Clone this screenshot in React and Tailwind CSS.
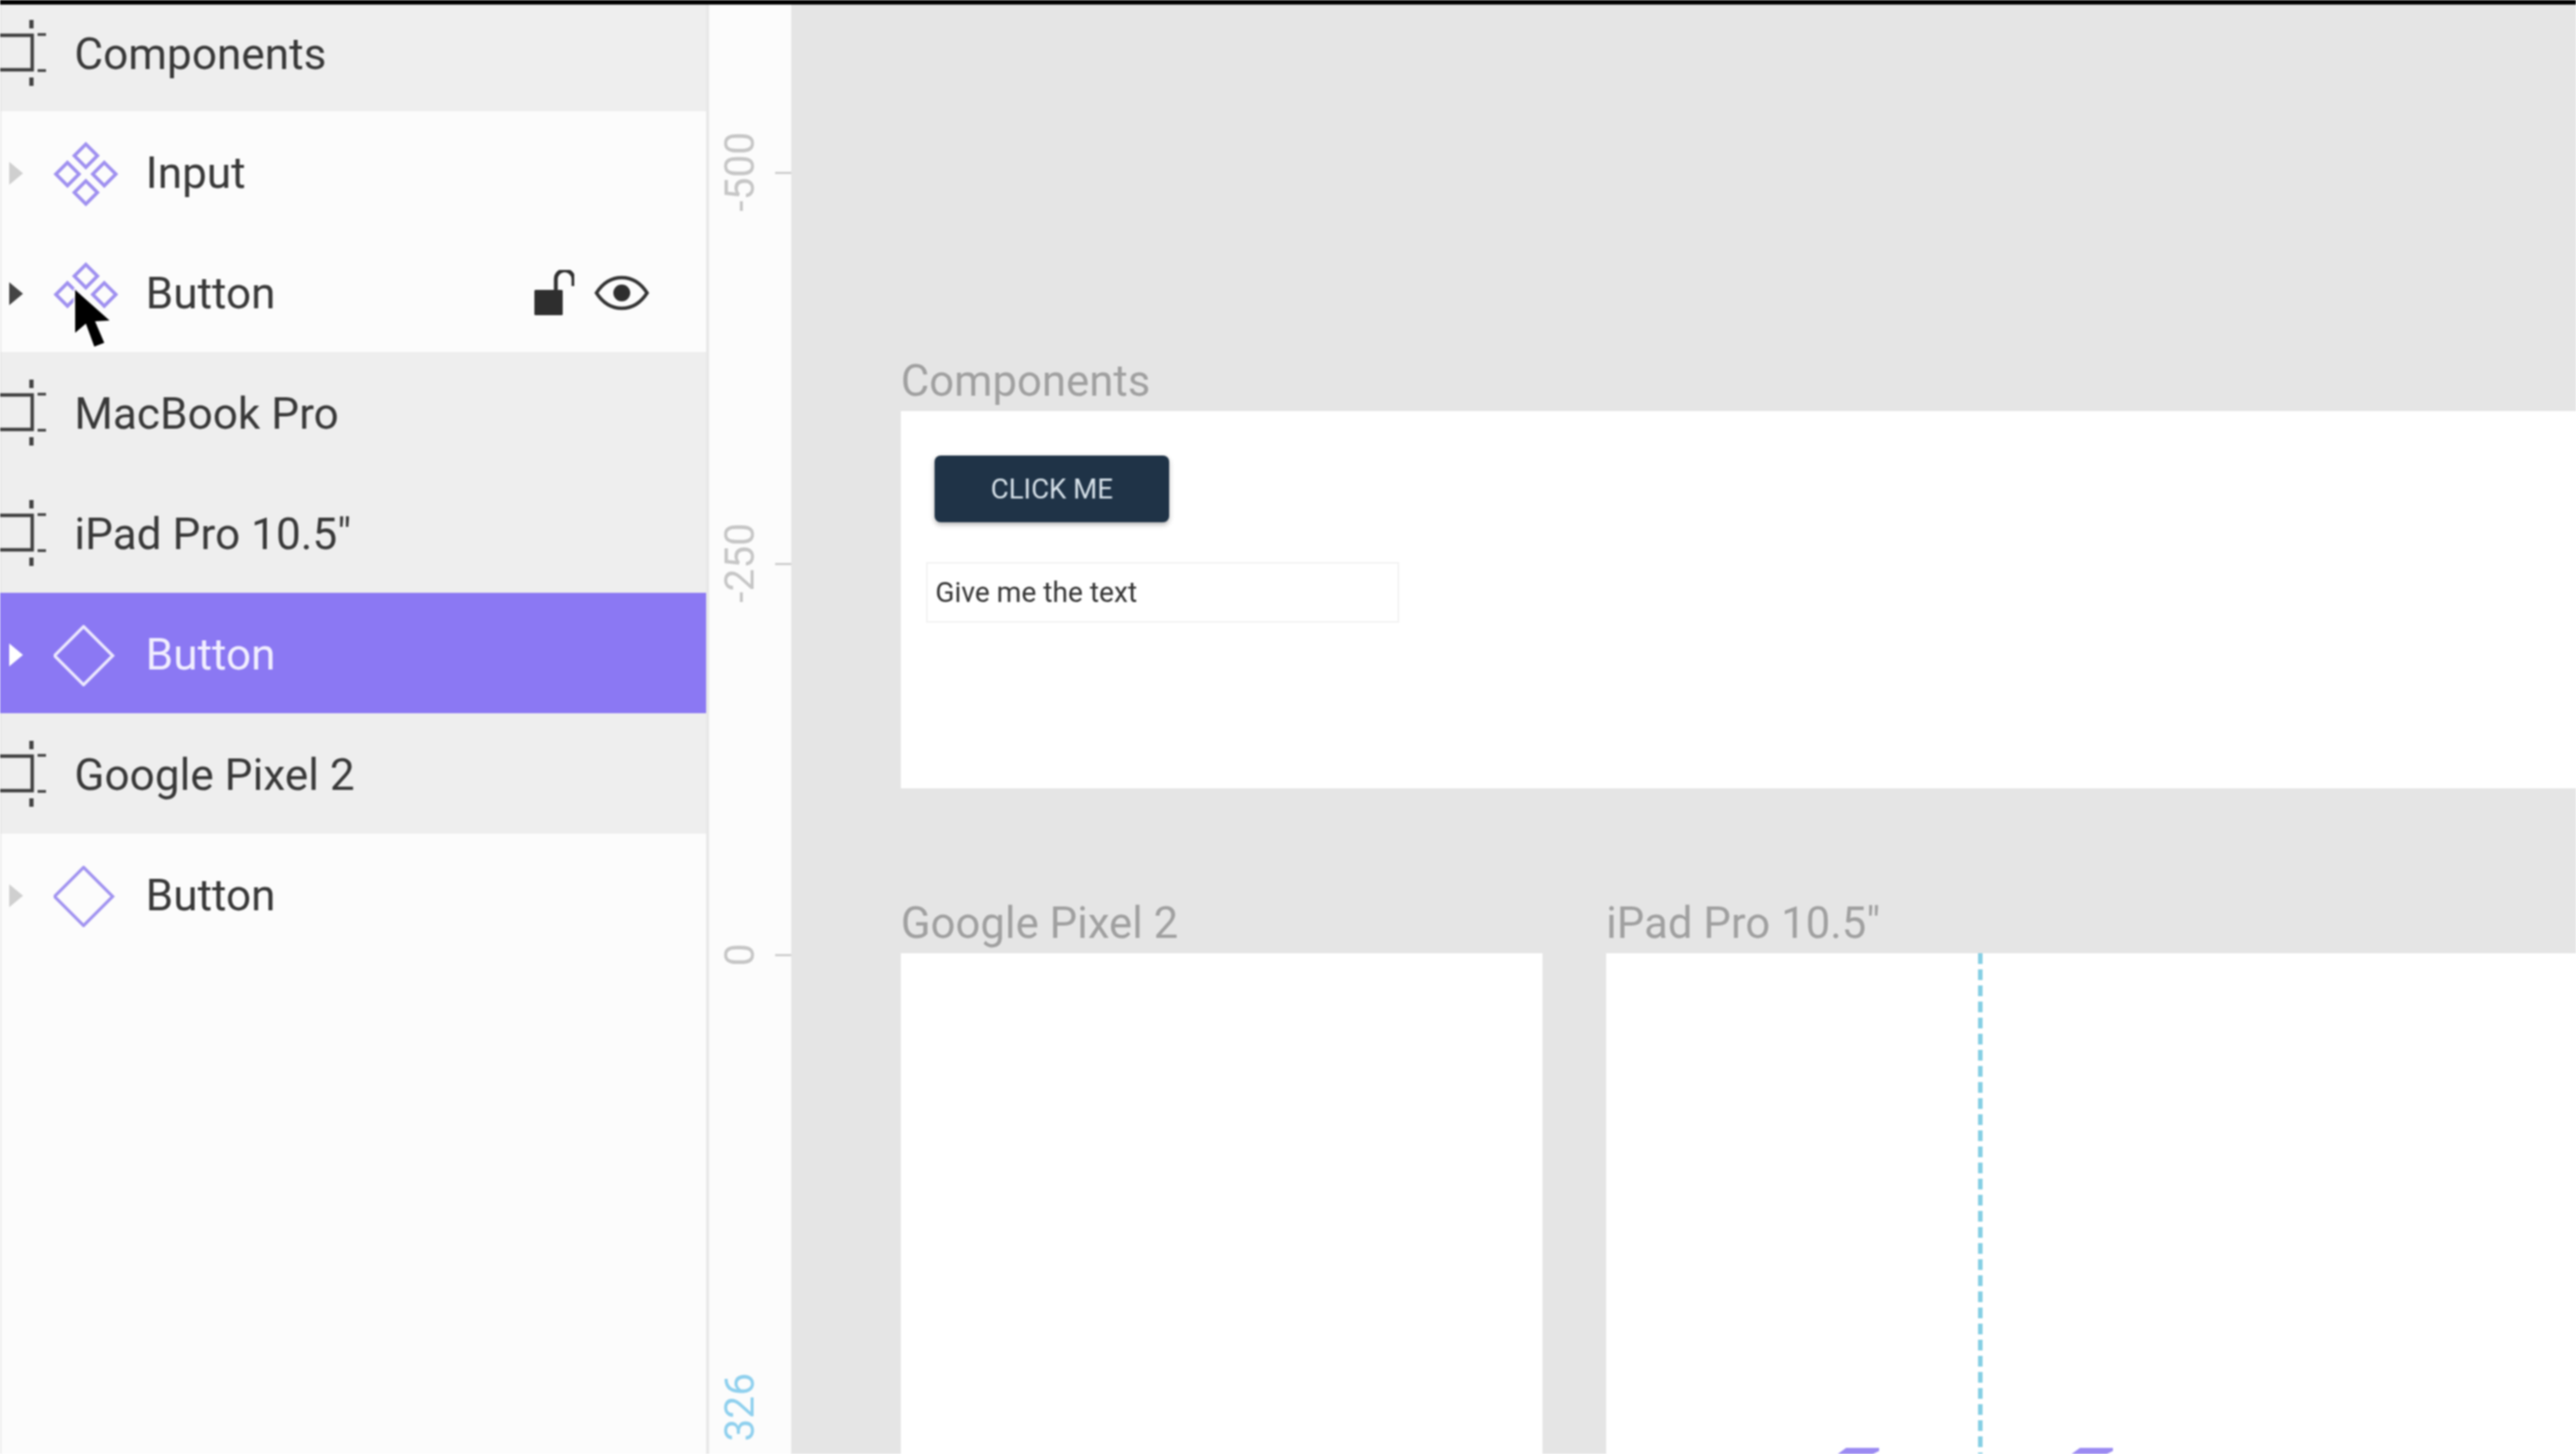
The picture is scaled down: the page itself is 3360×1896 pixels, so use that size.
const FrameIcon = () => (
  <svg width="64" height="90" viewBox="0 0 64 90" className="shrink-0" fill="none" stroke="#404040">
    <path d="M0 22H42V67H0" strokeWidth="4.5" />
    <path d="M41 2V13M41 77V88" strokeWidth="5.5" />
    <path d="M49 21H60M49 68H60" strokeWidth="3.5" />
  </svg>
);

const Triangle = ({ color }) => (
  <svg width="20" height="30" viewBox="0 0 20 30" className="shrink-0 mt-[4px]">
    <path d="M1 0L19 15L1 30Z" fill={color} />
  </svg>
);

const Quad = ({ hideBottom }) => (
  <svg width="84" height="84" viewBox="0 0 84 84" className="shrink-0 mt-[6px]" fill="none" stroke="#9f90f0" strokeWidth="4.5">
    <path d="M42 3L57 18L42 33L27 18Z" />
    <path d="M18 27L33 42L18 57L3 42Z" />
    <path d="M66 27L81 42L66 57L51 42Z" />
    {!hideBottom && <path d="M42 51L57 66L42 81L27 66Z" />}
  </svg>
);

const Diamond = ({ color }) => (
  <svg width="80" height="80" viewBox="0 0 80 80" className="shrink-0 mt-[6px]" fill="none" stroke={color} strokeWidth="4">
    <path d="M39 2L77 40L39 78L1 40Z" />
  </svg>
);

const GroupRow = ({ label, first }) => (
  <div className={`flex items-center bg-[#eeeeee] border-l-2 border-[#e6e6e6] ${first ? "h-[139px] pb-[14px]" : "h-[157px]"}`}>
    <div className="ml-[-2px] w-[97px] shrink-0">
      <FrameIcon />
    </div>
    <span className="text-[57.6px] leading-none mt-[4px] text-[#383838]">{label}</span>
  </div>
);

const ItemRow = ({ label, icon, triangle, selected, children }) => (
  <div className={`flex items-center h-[157px] ${selected ? "bg-[#8b78f3]" : "bg-[#fcfcfc] border-l-2 border-[#ececec]"}`}>
    <div className={`${selected ? "ml-[11px]" : "ml-[9px]"} w-[59px] shrink-0 flex`}>
      <Triangle color={triangle} />
    </div>
    <div className="w-[120px] shrink-0 flex">{icon}</div>
    <span className={`text-[57.6px] leading-none mt-[4px] ${selected ? "text-[#f1eefe]" : "text-[#383838]"}`}>{label}</span>
    {children}
  </div>
);

const Tick = ({ y }) => <div className="absolute right-0 w-[21px] h-[3px] bg-[#cfcfcf]" style={{ top: y }} />;

const RulerLabel = ({ y, children, blue }) => (
  <span
    className={`absolute left-[40px] w-0 h-0 flex items-center justify-center whitespace-nowrap text-[53px] leading-none -rotate-90 ${blue ? "text-[#8fd0ee]" : "text-[#c6c6c6]"}`}
    style={{ top: y }}
  >
    {children}
  </span>
);

const FrameLabel = ({ children }) => (
  <div className="h-[80px] flex items-center text-[57px] leading-none text-[#a0a0a0]">{children}</div>
);

const Peak = ({ left }) => (
  <svg width="58" height="10" viewBox="0 0 58 10" className="absolute bottom-0" style={{ left }}>
    <path d="M0 10L11 2H54L54 6L46 10Z" fill="#9b8af2" />
  </svg>
);

export default function App() {
  return (
    <div className="w-[3360px] h-[1896px] overflow-hidden flex flex-col bg-black font-['Roboto',sans-serif] blur-[1.2px]">
      <div className="h-[6px] shrink-0 bg-black" />
      <div className="flex-1 flex min-h-0">
        <div className="w-[925px] shrink-0 bg-[#fcfcfc] border-r-4 border-[#e8e8e8] flex flex-col relative">
          <GroupRow label="Components" first />
          <ItemRow label="Input" triangle="#cfcfcf" icon={<Quad />} />
          <ItemRow label="Button" triangle="#444444" icon={<Quad hideBottom />}>
            <div className="ml-auto mr-[73px] flex items-center gap-[25px]">
              <svg width="52" height="60" viewBox="0 0 52 60" className="mt-[2px]">
                <rect x="0" y="26" width="37" height="33" rx="1.5" fill="#2e2e2e" />
                <path d="M28 27V12A11.5 11.5 0 0 1 51 12V21" fill="none" stroke="#2e2e2e" strokeWidth="5" />
              </svg>
              <svg width="74" height="46" viewBox="0 0 74 46" className="mt-[2px]">
                <path d="M4 23C13 9 25 3 37 3C49 3 61 9 70 23C61 37 49 43 37 43C25 43 13 37 4 23Z" fill="none" stroke="#333333" strokeWidth="4.5" />
                <circle cx="37" cy="23" r="11" fill="#2e2e2e" />
              </svg>
            </div>
          </ItemRow>
          <GroupRow label="MacBook Pro" />
          <GroupRow label={'iPad Pro 10.5"'} />
          <ItemRow label="Button" selected triangle="#ffffff" icon={<Diamond color="#ece8fd" />} />
          <GroupRow label="Google Pixel 2" />
          <ItemRow label="Button" triangle="#cfcfcf" icon={<Diamond color="#a193f0" />} />
          <div className="flex-1 border-l-2 border-[#ececec]" />
          <svg width="64" height="92" viewBox="0 0 64 92" className="absolute left-[85px] top-[362px]">
            <path d="M13 10V66L27 54L38 84L51 79L39 51L58 50Z" fill="#000000" stroke="#ffffff" strokeWidth="5" strokeOpacity="0.75" paintOrder="stroke" strokeLinejoin="round" />
          </svg>
        </div>

        <div className="w-[107px] shrink-0 bg-[#fcfcfc] relative">
          <Tick y={218} />
          <Tick y={728} />
          <Tick y={1238} />
          <RulerLabel y={218}>-500</RulerLabel>
          <RulerLabel y={728}>-250</RulerLabel>
          <RulerLabel y={1239}>0</RulerLabel>
          <RulerLabel y={1829} blue>326</RulerLabel>
        </div>

        <div className="flex-1 min-w-0 bg-[#e5e5e5] pl-[143px] pt-[450px] flex flex-col">
          <FrameLabel>Components</FrameLabel>
          <div className="h-[492px] shrink-0 bg-white flex flex-col items-start">
            <div className="ml-[44px] mt-[58px] w-[306px] h-[87px] rounded-[8px] bg-[#1f3347] shadow-[0_3px_6px_rgba(0,0,0,0.3)] flex items-center justify-center text-[36px] text-[#d5e0e8]">
              CLICK ME
            </div>
            <div className="ml-[33px] mt-[52px] w-[617px] h-[79px] border-2 border-[#f2f2f2] flex items-center pl-[10px] text-[36.7px] text-[#333333]">
              Give me the text
            </div>
          </div>
          <div className="mt-[135px] flex flex-1 min-h-0 gap-[83px]">
            <div className="w-[837px] shrink-0 flex flex-col">
              <FrameLabel>Google Pixel 2</FrameLabel>
              <div className="flex-1 bg-white" />
            </div>
            <div className="flex-1 flex flex-col min-w-0">
              <FrameLabel>{'iPad Pro 10.5"'}</FrameLabel>
              <div className="flex-1 bg-white relative overflow-hidden">
                <div className="absolute left-[485px] top-0 bottom-0 w-[6px] bg-[repeating-linear-gradient(to_bottom,#86cfe4_0,#86cfe4_14px,transparent_14px,transparent_21px)]" />
                <Peak left={302} />
                <Peak left={607} />
              </div>
            </div>
          </div>
        </div>
      </div>
    </div>
  );
}
